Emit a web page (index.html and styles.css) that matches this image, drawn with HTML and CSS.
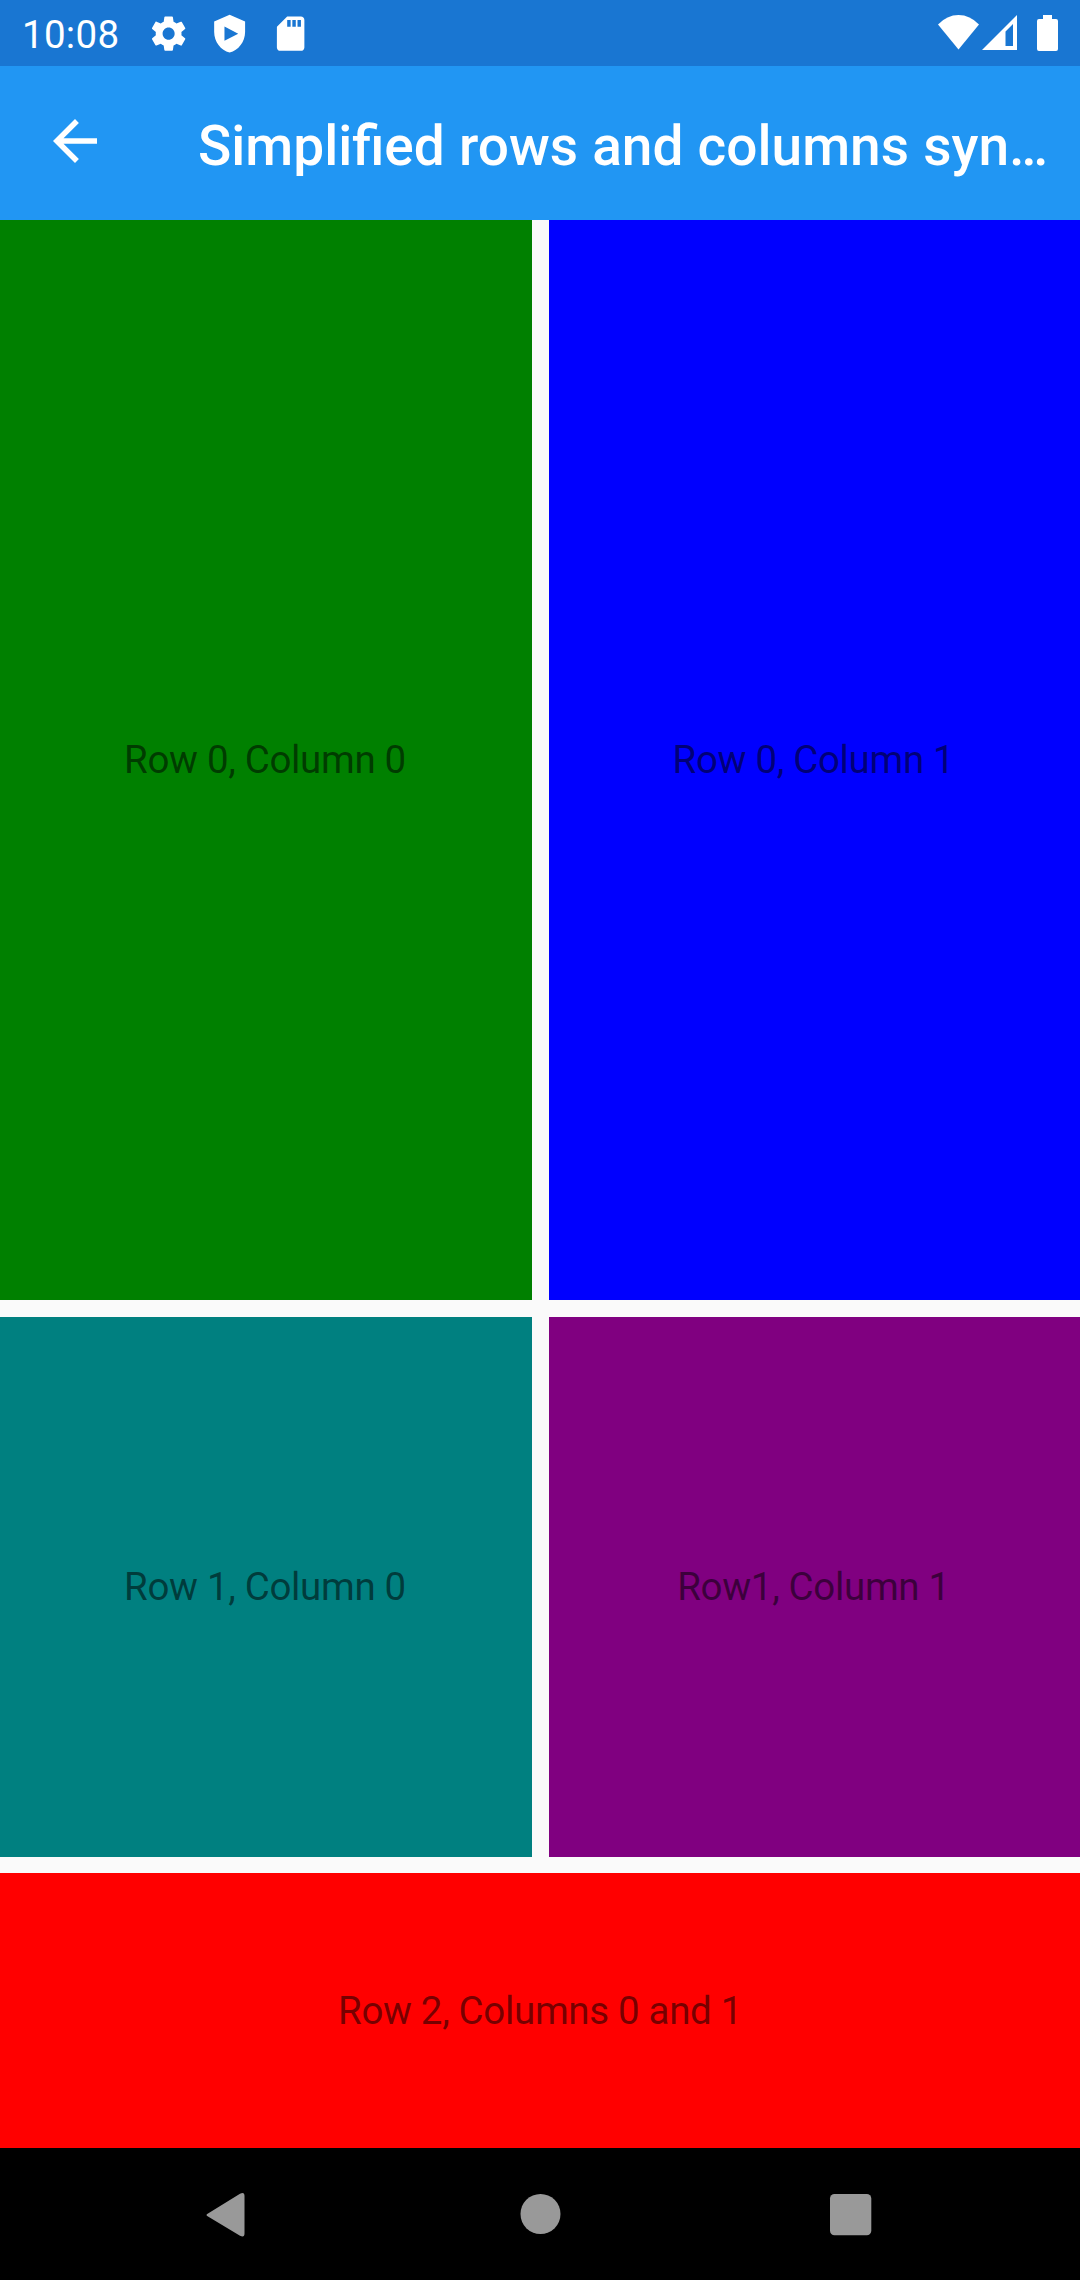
FILE: index.html
```html
<!DOCTYPE html>
<html lang="en">
<head>
<meta charset="utf-8">
<title>Simplified rows and columns</title>
<link rel="stylesheet" href="styles.css">
</head>
<body>
<div class="screen">
  <div class="status-bar">
    <span class="clock">10:08</span>
    <div class="notifications">
      <svg class="notice" viewBox="0 0 24 24"><path d="M19.43 12.98c.04-.32.07-.64.07-.98s-.03-.66-.07-.98l2.11-1.65c.19-.15.24-.42.12-.64l-2-3.46c-.12-.22-.39-.3-.61-.22l-2.49 1c-.52-.4-1.08-.73-1.69-.98l-.38-2.65C14.46 2.18 14.25 2 14 2h-4c-.25 0-.46.18-.49.42l-.38 2.65c-.61.25-1.17.59-1.69.98l-2.49-1c-.23-.09-.49 0-.61.22l-2 3.46c-.13.22-.07.49.12.64l2.11 1.65c-.04.32-.07.65-.07.98s.03.66.07.98l-2.11 1.65c-.19.15-.24.42-.12.64l2 3.46c.12.22.39.3.61.22l2.49-1c.52.4 1.08.73 1.69.98l.38 2.65c.03.24.24.42.49.42h4c.25 0 .46-.18.49-.42l.38-2.65c.61-.25 1.17-.59 1.69-.98l2.49 1c.23.09.49 0 .61-.22l2-3.46c.12-.22.07-.49-.12-.64l-2.11-1.65zM12 15.5c-1.93 0-3.5-1.57-3.5-3.5s1.57-3.5 3.5-3.5 3.5 1.57 3.5 3.5-1.57 3.5-3.5 3.5z"/></svg>
      <svg class="notice" viewBox="0 0 24 24"><path fill-rule="evenodd" d="M12 1 3 5v6c0 5.55 3.84 10.74 9 12 5.16-1.26 9-6.45 9-12V5zM9 7.8l8 4.2-8 4.2z"/></svg>
      <svg class="notice" viewBox="0 0 24 24"><path d="M18 2h-8L4.020 8 4 20c0 1.100.9 2 2 2h12c1.100 0 2-.9 2-2V4c0-1.100-.9-2-2-2zm-6 6h-2V4h2v4zm3 0h-2V4h2v4zm3 0h-2V4h2v4z"/></svg>
    </div>
    <div class="system">
      <svg class="wifi" viewBox="0 0 41 35"><path d="M0 9.500Q9 0 20.500 0T41 9.500L20.500 34.500z"/></svg>
      <svg class="signal" viewBox="0 0 35 35"><path fill-rule="evenodd" d="M35 0v35H0zM31 9l-7.500 7.500V31H31z"/></svg>
      <svg class="battery" viewBox="0 0 21 36"><path d="M6 0h9v4h4a2 2 0 0 1 2 2v28a2 2 0 0 1-2 2H2a2 2 0 0 1-2-2V6a2 2 0 0 1 2-2h4z"/></svg>
    </div>
  </div>
  <header class="app-bar">
    <svg class="back" viewBox="0 0 24 24"><path d="M20 11H7.830l5.590-5.590L12 4l-8 8 8 8 1.410-1.410L7.830 13H20v-2z"/></svg>
    <h1 class="title">Simplified rows and columns syn…</h1>
  </header>
  <main class="grid">
    <div class="cell green">Row 0, Column 0</div>
    <div class="cell blue">Row 0, Column 1</div>
    <div class="cell teal">Row 1, Column 0</div>
    <div class="cell purple">Row1, Column 1</div>
    <div class="cell red">Row 2, Columns 0 and 1</div>
  </main>
  <nav class="nav-bar">
    <svg class="nav-icon" viewBox="0 0 48 48"><path d="M6 21.500 38 1.800Q42.500-.5 42.500 4v37.500Q42.500 46 38 43.700L6 24.500Q3 23 6 21.500z"/></svg>
    <svg class="nav-icon" viewBox="0 0 48 48"><circle cx="25.500" cy="22" r="20"/></svg>
    <svg class="nav-icon" viewBox="0 0 48 48"><rect x="3" y="2" width="41.300" height="41.300" rx="4.500"/></svg>
  </nav>
</div>
</body>
</html>
```
FILE: styles.css
```css
* {
  box-sizing: border-box;
}

body {
  margin: 0;
  font-family: Roboto, sans-serif;
  background: #fafafa;
}

svg {
  display: block;
  flex: none;
  fill: #fff;
}

.screen {
  display: flex;
  flex-direction: column;
  width: 1080px;
  height: 2280px;
}

.status-bar {
  display: flex;
  height: 66px;
  padding: 0 22px;
  background: #1976d2;
  color: #fff;
}

.clock {
  width: 126px;
  font-size: 38.5px;
  letter-spacing: 0.3px;
  line-height: 69px;
}

.notifications {
  display: flex;
  gap: 19.6px;
  padding-top: 12.700px;
}

.notice {
  width: 41.250px;
  height: 41.250px;
}

.system {
  display: flex;
  margin-left: auto;
  padding-top: 15px;
}

.wifi {
  width: 41px;
  height: 35px;
}

.signal {
  width: 35px;
  height: 35px;
  margin-left: 3px;
}

.battery {
  width: 21px;
  height: 36px;
  margin-left: 20px;
}

.app-bar {
  display: flex;
  height: 154px;
  padding-left: 42px;
  background: #2196f3;
  color: #fff;
}

.back {
  width: 66px;
  height: 66px;
  margin-top: 42px;
}

.title {
  margin: 0 0 0 90px;
  font-size: 55px;
  font-weight: 500;
  word-spacing: 0.5px;
  line-height: 160px;
  white-space: nowrap;
}

.grid {
  display: grid;
  grid-template-columns: 532px 531px;
  grid-template-rows: 1080px 540px 275px;
  column-gap: 17px;
  align-content: space-between;
  height: 1928px;
}

.cell {
  display: flex;
  align-items: center;
  justify-content: center;
  padding-right: 2px;
  font-size: 38.5px;
  letter-spacing: -0.33px;
  color: rgba(0, 0, 0, 0.54);
}

.green,
.blue {
  padding-bottom: 2px;
}

.green {
  background: #008000;
}

.blue {
  background: #0000ff;
}

.teal {
  background: #008080;
}

.purple {
  background: #800080;
}

.red {
  grid-column: 1 / 3;
  padding-right: 0;
  background: #ff0000;
}

.nav-bar {
  display: flex;
  justify-content: space-between;
  height: 132px;
  padding: 44px 205px 0 202px;
  background: #000;
}

.nav-icon {
  width: 48px;
  height: 48px;
  fill: #999;
}
```
